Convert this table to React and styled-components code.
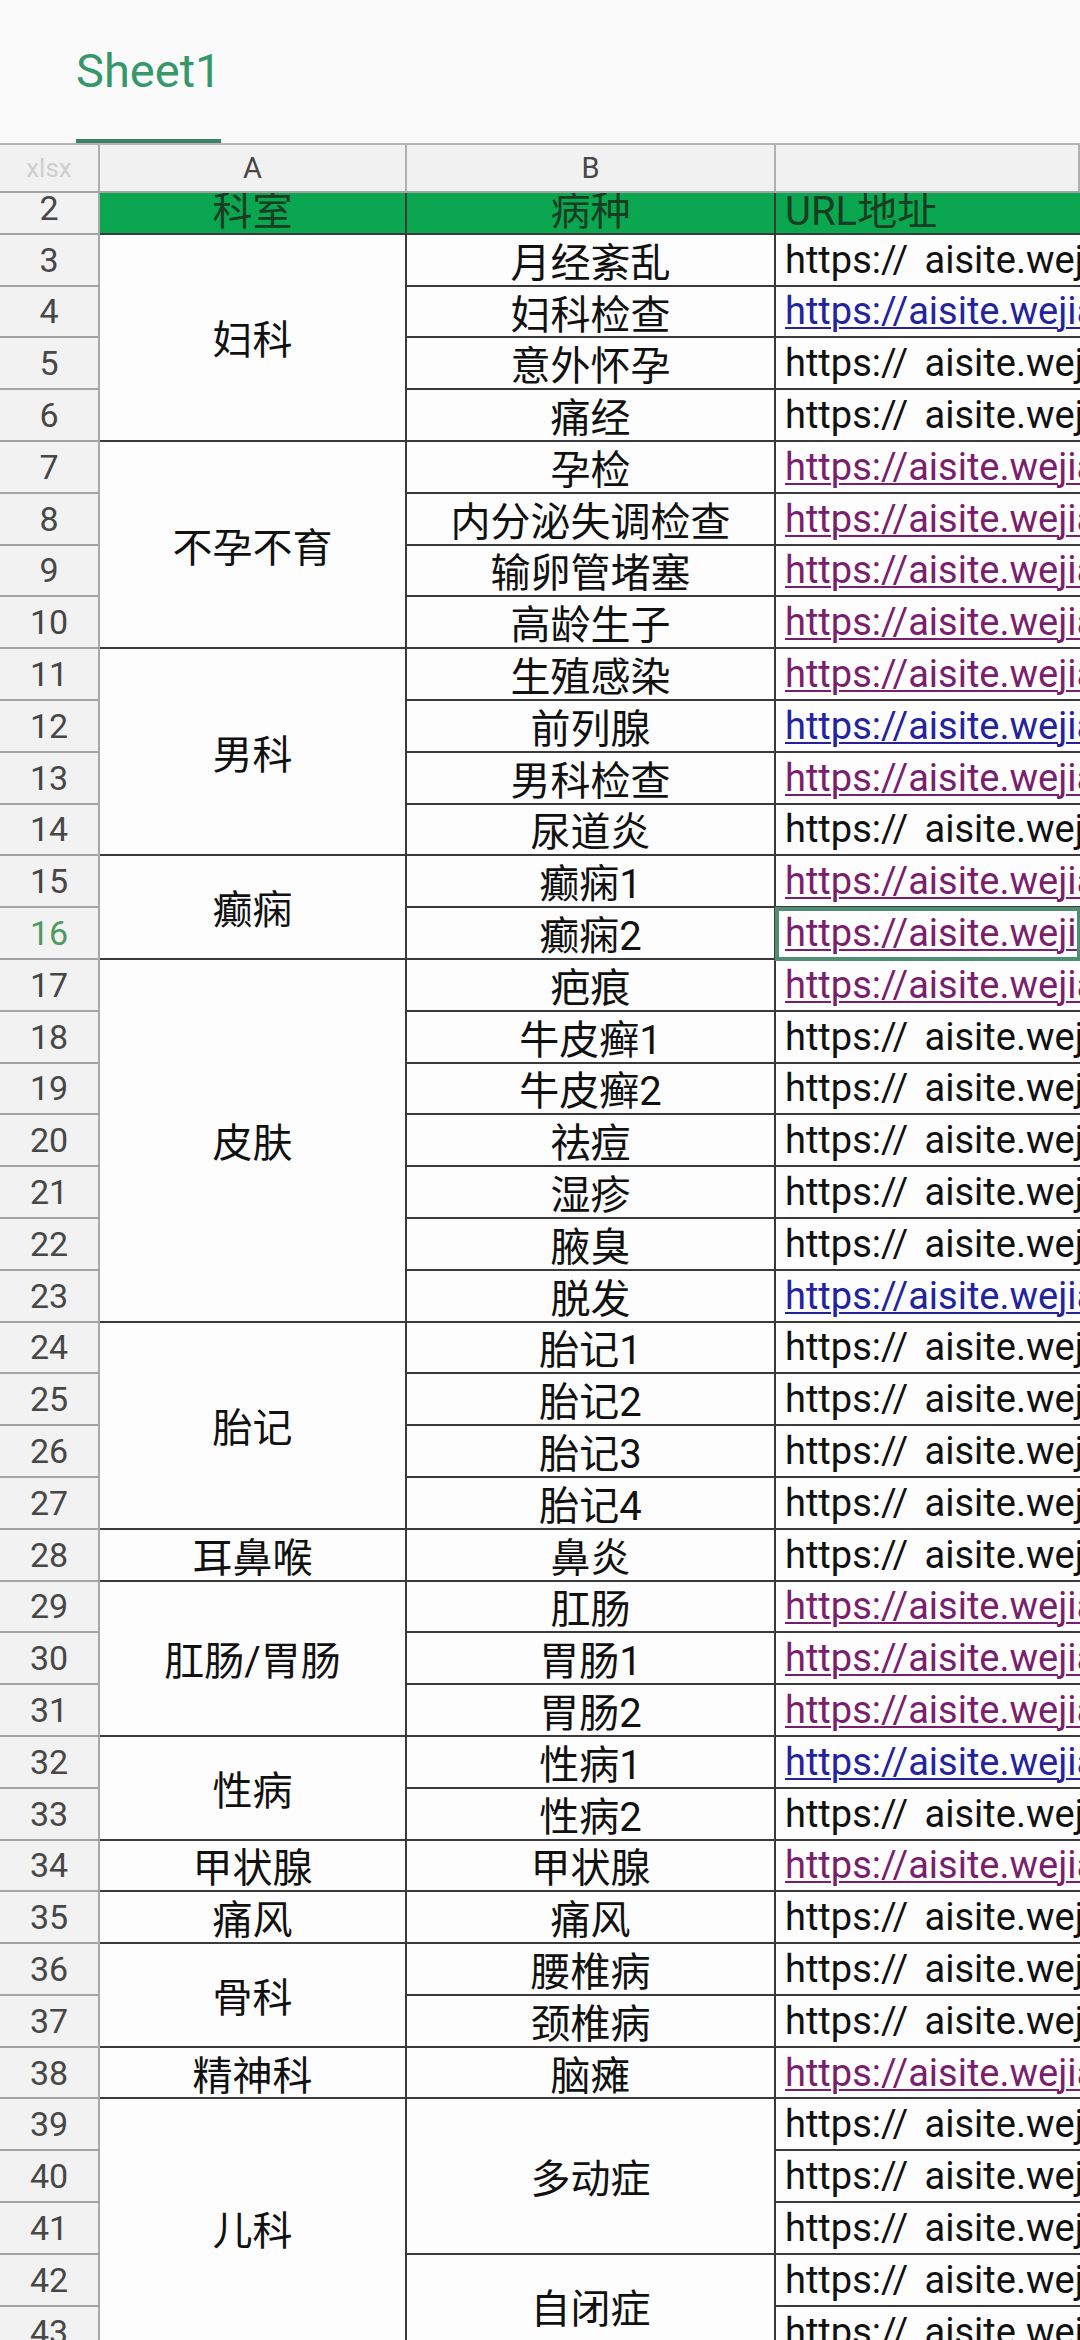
import React from "react";
import styled, { createGlobalStyle } from "styled-components";

const COLS = "100px 307px 369px 1fr";
const ROW_H = 51.8;
const ACTIVE_ROW = 16;

const GlobalStyle = createGlobalStyle`
  html, body {
    margin: 0;
    padding: 0;
    background: #fafafa;
  }
`;

const Page = styled.div`
  width: 1080px;
  height: 2340px;
  overflow: hidden;
  background: #fafafa;
  font-family: Roboto, "Noto Sans CJK SC", sans-serif;
`;

// sheet tab strip
const TabBar = styled.div`
  display: flex;
  padding: 43px 0 0 76px;
  height: 143px;
  box-sizing: border-box;
`;

const Tab = styled.div`
  display: flex;
  flex-direction: column;
  justify-content: space-between;
`;

const TabLabel = styled.span`
  font-size: 47px;
  line-height: 55px;
  color: #35976a;
`;

const TabLine = styled.div`
  height: 4px;
  background: #3b8266;
`;

// column letters
const HeaderRow = styled.div`
  display: grid;
  grid-template-columns: ${COLS};
  height: 50px;
  box-sizing: border-box;
  border-top: 2px solid #b4b4b4;
  border-bottom: 2px solid #a4a4a4;
  background: #f1f1f1;
`;

const ColHead = styled.div`
  display: flex;
  align-items: center;
  justify-content: center;
  border-right: 2px solid #b0b0b0;
  font-size: ${(p) => (p.$muted ? "26px" : "29px")};
  color: ${(p) => (p.$muted ? "#cfcfcf" : "#474747")};
`;

const Viewport = styled.div`
  overflow: hidden;
`;

const Sheet = styled.div`
  display: grid;
  grid-template-columns: ${COLS};
  grid-template-rows: repeat(42, ${ROW_H}px);
  margin-top: -10px;
`;

const RowNum = styled.div`
  grid-column: 1;
  grid-row: ${(p) => p.$row};
  display: flex;
  align-items: center;
  justify-content: center;
  box-sizing: border-box;
  background: #f2f2f2;
  border-right: 2px solid #a8a8a8;
  border-bottom: 2px solid #a3a3a3;
  font-size: 34px;
  color: ${(p) => (p.$active ? "#4f9b5e" : "#474747")};
`;

const Cell = styled.div`
  grid-column: ${(p) => p.$col};
  grid-row: ${(p) => p.$row} / span ${(p) => p.$span || 1};
  display: flex;
  align-items: center;
  justify-content: ${(p) => (p.$left ? "flex-start" : "center")};
  padding-left: ${(p) => (p.$left ? "9px" : "0")};
  box-sizing: border-box;
  overflow: hidden;
  white-space: nowrap;
  background: ${(p) => (p.$head ? "#0ba650" : "#fdfdfd")};
  border-bottom: 2px solid #3a3a3a;
  border-right: ${(p) => (p.$col === 4 ? "none" : "2px solid #3a3a3a")};
  font-size: 40px;
  color: ${(p) => (p.$head ? "#183d22" : "#111")};
`;

const UrlCell = styled(Cell)`
  font-size: 38px;
  position: relative;
  ${(p) =>
    p.$selected &&
    `
    outline: 4px solid #4e8f74;
    outline-offset: -3px;
    z-index: 1;
  `}
`;

const LINK_COLORS = { b: "#2323a0", p: "#7a1f6e" };

const Url = styled.span`
  color: ${(p) => LINK_COLORS[p.$kind] || "#111"};
  text-decoration: ${(p) => (p.$kind === "t" ? "none" : "underline")};
  text-decoration-thickness: 2px;
  text-underline-offset: 3px;
  word-spacing: ${(p) => (p.$kind === "t" ? "7px" : "0")};
`;

// department -> [disease, link kind per row]; t = text, b = link, p = visited
const DEPTS = [
  ["妇科", [["月经紊乱", "t"], ["妇科检查", "b"], ["意外怀孕", "t"], ["痛经", "t"]]],
  ["不孕不育", [["孕检", "p"], ["内分泌失调检查", "p"], ["输卵管堵塞", "p"], ["高龄生子", "p"]]],
  ["男科", [["生殖感染", "p"], ["前列腺", "b"], ["男科检查", "p"], ["尿道炎", "t"]]],
  ["癫痫", [["癫痫1", "p"], ["癫痫2", "p"]]],
  ["皮肤", [["疤痕", "p"], ["牛皮癣1", "t"], ["牛皮癣2", "t"], ["祛痘", "t"], ["湿疹", "t"], ["腋臭", "t"], ["脱发", "b"]]],
  ["胎记", [["胎记1", "t"], ["胎记2", "t"], ["胎记3", "t"], ["胎记4", "t"]]],
  ["耳鼻喉", [["鼻炎", "t"]]],
  ["肛肠/胃肠", [["肛肠", "p"], ["胃肠1", "p"], ["胃肠2", "p"]]],
  ["性病", [["性病1", "b"], ["性病2", "t"]]],
  ["甲状腺", [["甲状腺", "p"]]],
  ["痛风", [["痛风", "t"]]],
  ["骨科", [["腰椎病", "t"], ["颈椎病", "t"]]],
  ["精神科", [["脑瘫", "p"]]],
  ["儿科", [["多动症", "ttt"], ["自闭症", "tt"]]],
];

// sheet row number -> grid row
const g = (r) => r - 1;

function buildCells() {
  const cells = [];
  let r = 3;
  DEPTS.forEach(([dept, diseases]) => {
    const deptStart = r;
    diseases.forEach(([name, kinds]) => {
      const start = r;
      kinds.split("").forEach((kind) => {
        cells.push(
          <UrlCell key={`c${r}`} $col={4} $row={g(r)} $left $selected={r === ACTIVE_ROW}>
            <Url $kind={kind}>
              {kind === "t" ? "https:// aisite.wejianzhan.com/site" : "https://aisite.wejianzhan.com/site"}
            </Url>
          </UrlCell>
        );
        r++;
      });
      cells.push(
        <Cell key={`b${start}`} $col={3} $row={g(start)} $span={r - start}>
          {name}
        </Cell>
      );
    });
    cells.push(
      <Cell key={`a${deptStart}`} $col={2} $row={g(deptStart)} $span={r - deptStart}>
        {dept}
      </Cell>
    );
  });
  return { cells, last: r - 1 };
}

export default function App() {
  const { cells, last } = buildCells();
  const numbers = [];
  for (let r = 2; r <= last; r++) numbers.push(r);

  return (
    <Page>
      <GlobalStyle />
      <TabBar>
        <Tab>
          <TabLabel>Sheet1</TabLabel>
          <TabLine />
        </Tab>
      </TabBar>

      <HeaderRow>
        <ColHead $muted>xlsx</ColHead>
        <ColHead>A</ColHead>
        <ColHead>B</ColHead>
        <ColHead />
      </HeaderRow>

      <Viewport>
        <Sheet>
          {numbers.map((r) => (
            <RowNum key={r} $row={g(r)} $active={r === ACTIVE_ROW}>
              {r}
            </RowNum>
          ))}

          <Cell $head $col={2} $row={1}>科室</Cell>
          <Cell $head $col={3} $row={1}>病种</Cell>
          <Cell $head $col={4} $row={1} $left>URL地址</Cell>

          {cells}
        </Sheet>
      </Viewport>
    </Page>
  );
}
